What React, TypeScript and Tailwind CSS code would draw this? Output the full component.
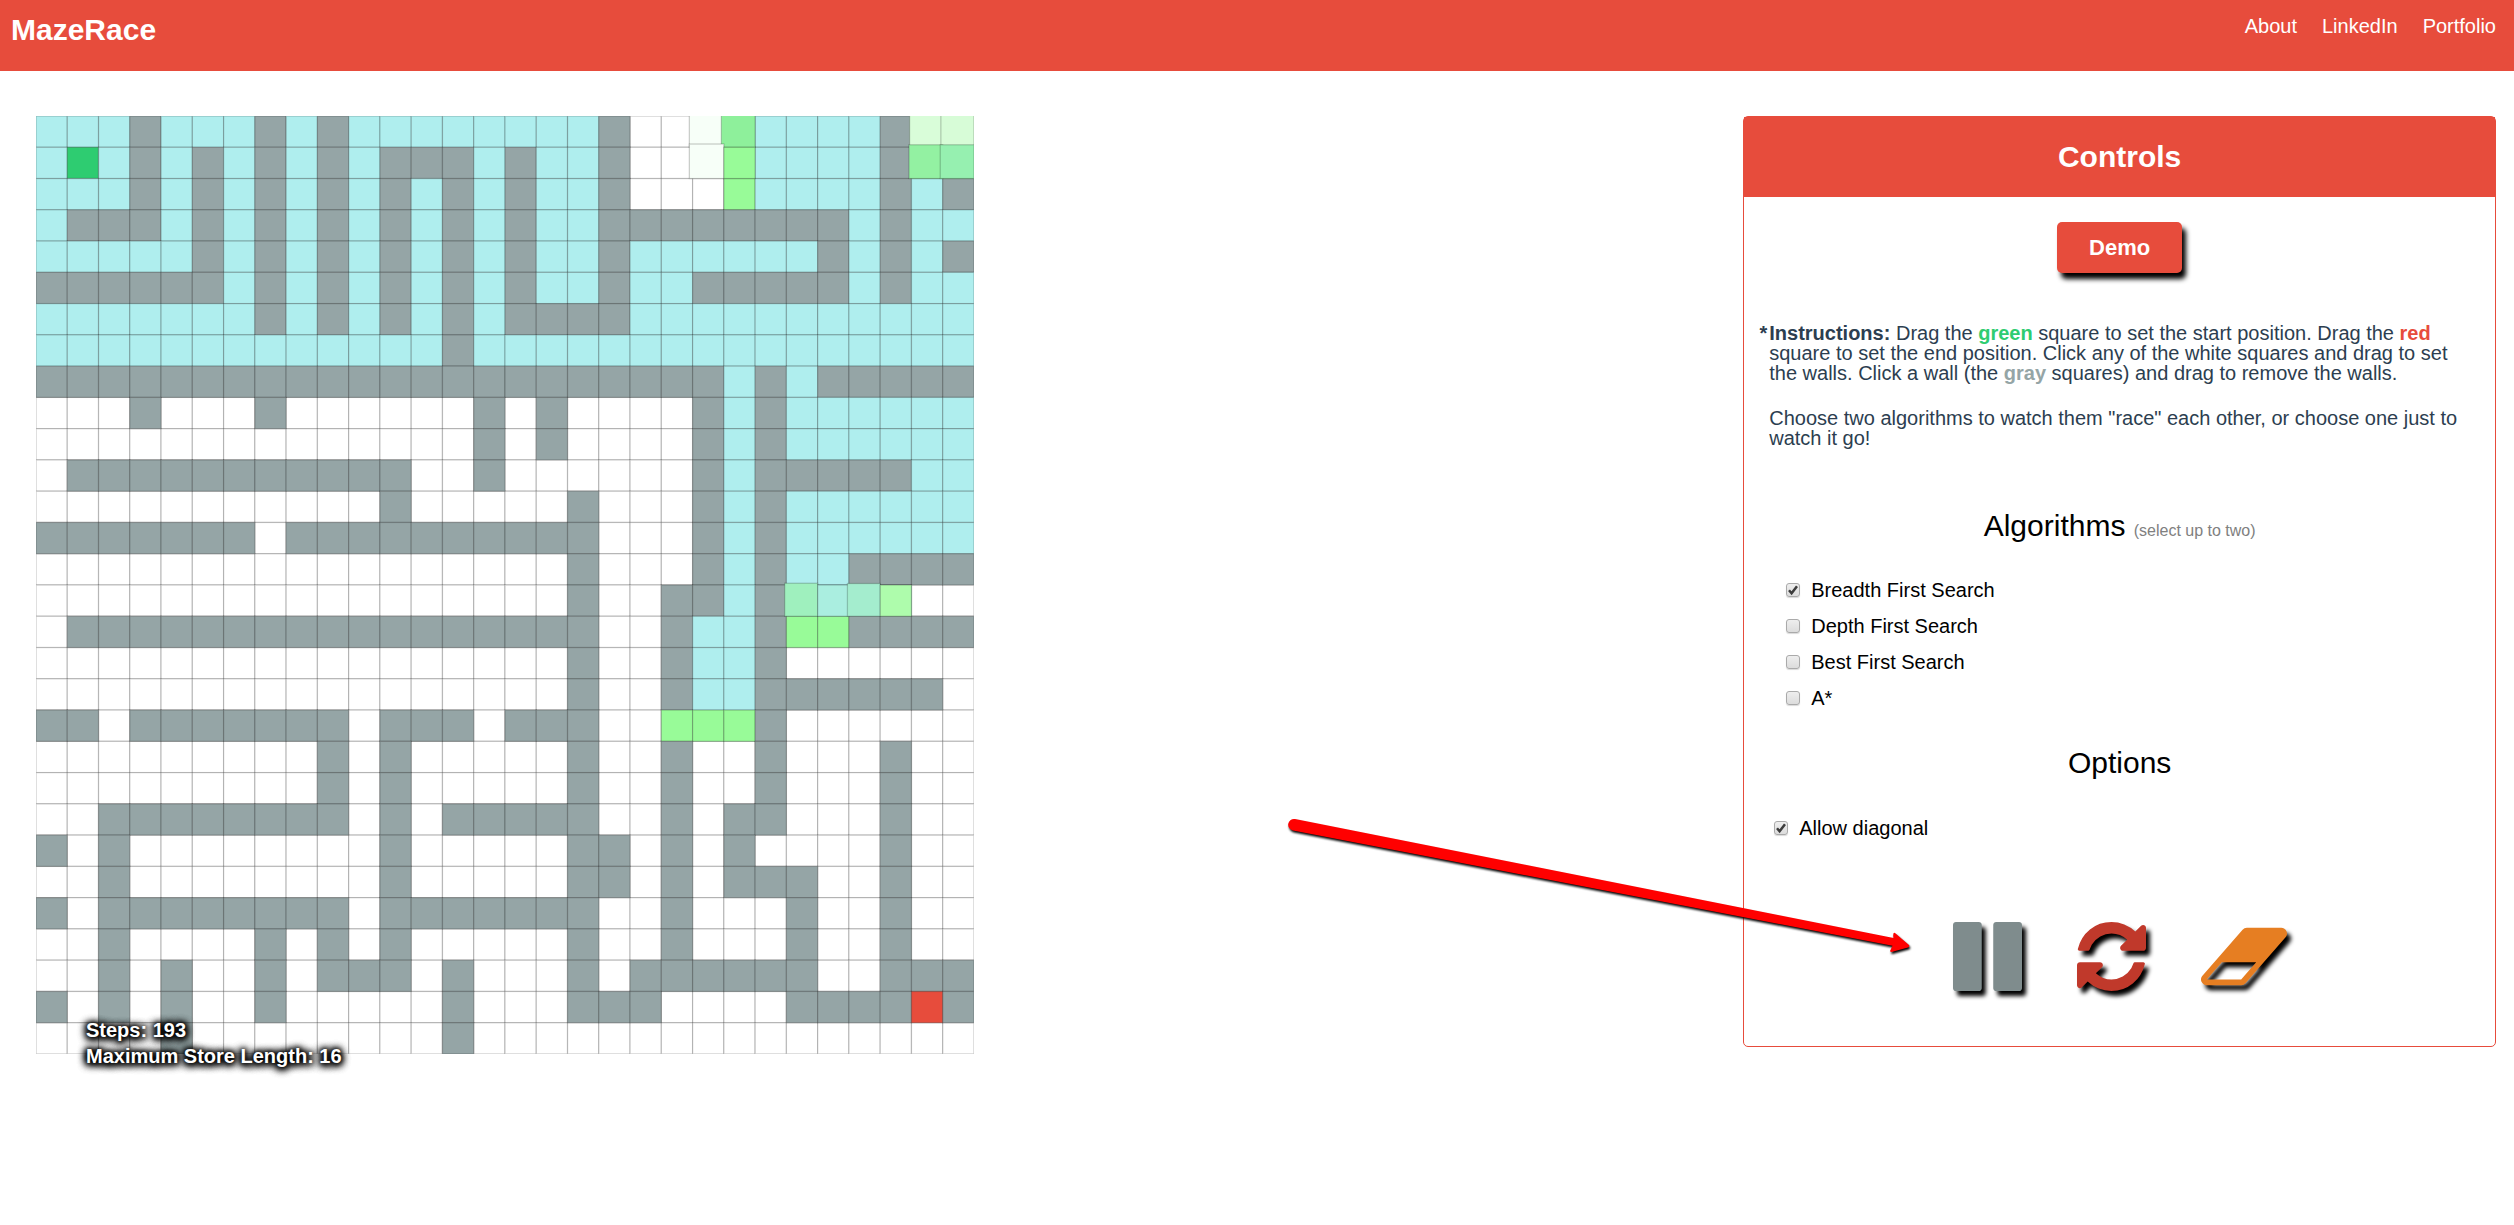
import { useState } from "react";

// c = visited, o = queued, # = wall, S = start, E = end, . = free
const ROWS = [
  "ccc#ccc#c#cccccccc#...occcc#oo",
  "cSc#c#c#c#c###c#cc#...occcc#oo",
  "ccc#c#c#c#c#c#c#cc#...occcc#c#",
  "c###c#c#c#c#c#c#cc########c#cc",
  "ccccc#c#c#c#c#c#cc#cccccc#c#c#",
  "######c#c#c#c#c#cc#cc#####c#cc",
  "ccccccc#c#c#c#c####ccccccccccc",
  "ccccccccccccc#cccccccccccccccc",
  "######################c#c#####",
  "...#...#......#.#....#c#cccccc",
  "..............#.#....#c#cccccc",
  ".###########..#......#c#####cc",
  "...........#.....#...#c#cccccc",
  "#######.##########...#c#cccccc",
  ".................#...#c#cc####",
  ".................#..##c#cccc..",
  ".#################..#cc#oo####",
  ".................#..#cc#......",
  ".................#..#cc######.",
  "##.#######.###.###..ooo#......",
  ".........#.#.....#..#..#...#..",
  ".........#.#.....#..#..#...#..",
  "..########.#.#####..#.##...#..",
  "#.#........#.....##.#.#....#..",
  "..#........#.....##.#.###..#..",
  "#.########.#######..#...#..#..",
  "..#....#.#.#.....#..#...#..#..",
  "..#.#..#.###.#...#.######..###",
  "#.#.#..#.....#...###....####E#",
  "....#........#................",
];

const COLORS: Record<string, string> = {
  c: "#afeeee",
  o: "#98fb98",
  "#": "#95a5a6",
  S: "#2ecc71",
  E: "#e74c3c",
};

// Cells in the middle of their colour transition: column, row, growth, colour
const ANIMATED: [number, number, number, string][] = [
  [21, 0, 2.6, "#f7fff8"],
  [22, 0, 2, "#8ef09b"],
  [21, 1, 2.6, "#f7fff8"],
  [22, 1, 0, "#98fb98"],
  [28, 0, 1.5, "#d9fdd9"],
  [29, 0, 1.5, "#d7fcd7"],
  [28, 1, 2, "#93f1a2"],
  [29, 1, 2, "#96f0b0"],
  [24, 15, 1.4, "#9ff0be"],
  [25, 15, 0, "#aaeee0"],
  [26, 15, 1.2, "#a4edce"],
  [27, 15, 0, "#aefcac"],
];

const SIZE = 25;

function Maze() {
  const cells = ROWS.flatMap((row, y) => [...row].map((kind, x) => ({ kind, x, y })));
  return (
    <svg viewBox="0 0 750 750" className="block h-[938px] w-[938px]" stroke="#000" strokeOpacity="0.2" aria-label="Maze">
      {cells.map(({ x, y }) => (
        <rect key={`${x}-${y}`} x={x * SIZE} y={y * SIZE} width={SIZE} height={SIZE} fill="#fff" />
      ))}
      {cells
        .filter(({ kind }) => kind !== ".")
        .map(({ kind, x, y }) => (
          <rect key={`${x}-${y}`} x={x * SIZE} y={y * SIZE} width={SIZE} height={SIZE} fill={COLORS[kind]} />
        ))}
      {ANIMATED.map(([x, y, grow, fill]) => (
        <rect
          key={`${x}-${y}`}
          x={x * SIZE - grow}
          y={y * SIZE - grow}
          width={SIZE + grow}
          height={SIZE + grow}
          fill={fill}
        />
      ))}
    </svg>
  );
}

function Check({ label, initial }: { label: string; initial: boolean }) {
  const [on, setOn] = useState(initial);
  return (
    <label className="flex h-[36px] w-fit items-center gap-[11px]">
      <span className="relative block size-[14px]">
        <input
          type="checkbox"
          checked={on}
          onChange={() => setOn(!on)}
          className="peer block size-[14px] appearance-none rounded-[3px] border border-[#aaaaaa] bg-linear-to-b from-[#eeeeee] to-[#dcdcdc] shadow-[0_1px_1px_rgba(0,0,0,0.15)]"
        />
        <svg viewBox="0 0 14 14" className="pointer-events-none invisible absolute inset-0 peer-checked:visible">
          <path d="M3 7.2 5.600 10.200 11 3.200" fill="none" stroke="#3c3c3c" strokeWidth="2.5" />
        </svg>
      </span>
      {label}
    </label>
  );
}

const ICON = "h-[69px] overflow-visible drop-shadow-[4px_5px_2px_#000]";

export default function App() {
  return (
    <div className="min-h-screen bg-white font-['Liberation_Sans',Arial,sans-serif] text-[20px] text-black">
      <header className="flex h-[71px] items-start justify-between bg-[#e74c3c] pr-[18px] pl-[11px] text-white">
        <h1 className="pt-[12px] text-[30px] leading-[36px] font-bold">MazeRace</h1>
        <nav className="flex gap-[25px] pt-[14px] leading-[24px]">
          <a href="#about">About</a>
          <a href="#linkedin">LinkedIn</a>
          <a href="#portfolio">Portfolio</a>
        </nav>
      </header>

      <main className="flex items-start justify-between pt-[45px] pr-[18px] pl-[36px]">
        <section className="relative">
          <Maze />
          <div className="absolute top-[901px] left-[50px] leading-[26px] font-bold whitespace-nowrap text-white [text-shadow:0_0_4px_#000,0_1px_6px_#000,0_1px_8px_#000,0_1px_8px_#000,0_1px_10px_#000,0_1px_10px_#000]">
            <p>Steps: 193</p>
            <p>Maximum Store Length: 16</p>
          </div>
        </section>

        <section className="relative w-[30.6%] rounded-[5px] border border-[#e74c3c] pb-[55px]">
          <h2 className="bg-[#e74c3c] py-[22px] text-center text-[30px] leading-[36px] font-bold text-white">
            Controls
          </h2>
          <button
            type="button"
            className="mx-auto mt-[25px] block h-[51px] w-[125px] rounded-[5px] bg-[#e74c3c] text-[22px] font-bold text-white shadow-[4px_6px_5px_#000]"
          >
            Demo
          </button>
          <div className="mt-[50px] px-[25px] leading-[20px] text-[#2c3e50]">
            <p className="relative">
              <b className="absolute right-full pr-[2px]">*</b>
              <b>Instructions:</b> Drag the <b className="text-[#2ecc71]">green</b> square to set the start position. Drag
              the <b className="text-[#e74c3c]">red</b> square to set the end position. Click any of the white squares and
              drag to set the walls. Click a wall (the <b className="text-[#95a5a6]">gray</b> squares) and drag to remove
              the walls.
            </p>
            <p className="mt-[25px]">
              Choose two algorithms to watch them "race" each other, or choose one just to watch it go!
            </p>
          </div>
          <h3 className="mt-[60px] text-center text-[30px] leading-[36px]">
            Algorithms <small className="text-[16px] leading-none text-[#808080]">(select up to two)</small>
          </h3>
          <div className="mt-[28px] pl-[42px]">
            <Check label="Breadth First Search" initial={true} />
            <Check label="Depth First Search" initial={false} />
            <Check label="Best First Search" initial={false} />
            <Check label="A*" initial={false} />
          </div>
          <h3 className="mt-[29px] text-center text-[30px] leading-[36px]">Options</h3>
          <div className="mt-[29px] pl-[30px]">
            <Check label="Allow diagonal" initial={true} />
          </div>
          <div className="mt-[76px] flex justify-center gap-[55px]">
            <button type="button" aria-label="Pause">
              <svg viewBox="128 128 1536 1536" className={`${ICON} w-[69px]`} fill="#7f8c8d">
                <path d="M1664 192v1408q0 26-19 45t-45 19h-512q-26 0-45-19t-19-45v-1408q0-26 19-45t45-19h512q26 0 45 19t19 45zm-896 0v1408q0 26-19 45t-45 19h-512q-26 0-45-19t-19-45v-1408q0-26 19-45t45-19h512q26 0 45 19t19 45z" />
              </svg>
            </button>
            <button type="button" aria-label="Restart">
              <svg viewBox="128 128 1536 1536" className={`${ICON} w-[69px]`} fill="#c0392b">
                <path d="M1639 1056q0 5-1 7-64 268-268 434.5t-478 166.5q-146 0-282.5-55t-243.5-157l-129 129q-19 19-45 19t-45-19-19-45v-448q0-26 19-45t45-19h448q26 0 45 19t19 45-19 45l-137 137q71 66 161 102t187 36q134 0 250-65t186-179q11-17 53-117 8-23 30-23h192q13 0 22.5 9.5t9.5 22.5zm25-800v448q0 26-19 45t-45 19h-448q-26 0-45-19t-19-45 19-45l138-138q-148-137-349-137-134 0-250 65t-186 179q-11 17-53 117-8 23-30 23h-199q-13 0-22.5-9.5t-9.5-22.5v-7q65-268 270-434.5t480-166.5q146 0 284 55.5t245 156.5l130-129q19-19 45-19t45 19 19 45z" />
              </svg>
            </button>
            <button type="button" aria-label="Erase">
              <svg viewBox="64 128 1920 1536" className={`${ICON} w-[86px]`} fill="#e67e22">
                <path d="M960 1408l336-384h-768l-336 384h768zm1013-1077q15 34 9.5 71.5t-30.5 65.5l-896 1024q-38 44-96 44h-768q-38 0-69.5-20.5t-47.5-54.5q-15-34-9.5-71.5t30.5-65.5l896-1024q38-44 96-44h768q38 0 69.5 20.5t47.5 54.5z" />
              </svg>
            </button>
          </div>
          <svg
            viewBox="0 0 630 145"
            className="pointer-events-none absolute top-[697px] -left-[460px] h-[145px] w-[630px] max-w-none overflow-visible drop-shadow-[1px_2px_1px_#000]"
            fill="#f00"
          >
            <path d="M11 5 609.500 124 Q608.500 118 611 119 L625 131Q626 132.500 624 133.500L607.500 138Q605.500 138 606.500 136L608.500 131.800 9 16.500A5.800 5.800 0 0 1 11 5Z" />
          </svg>
        </section>
      </main>
    </div>
  );
}
